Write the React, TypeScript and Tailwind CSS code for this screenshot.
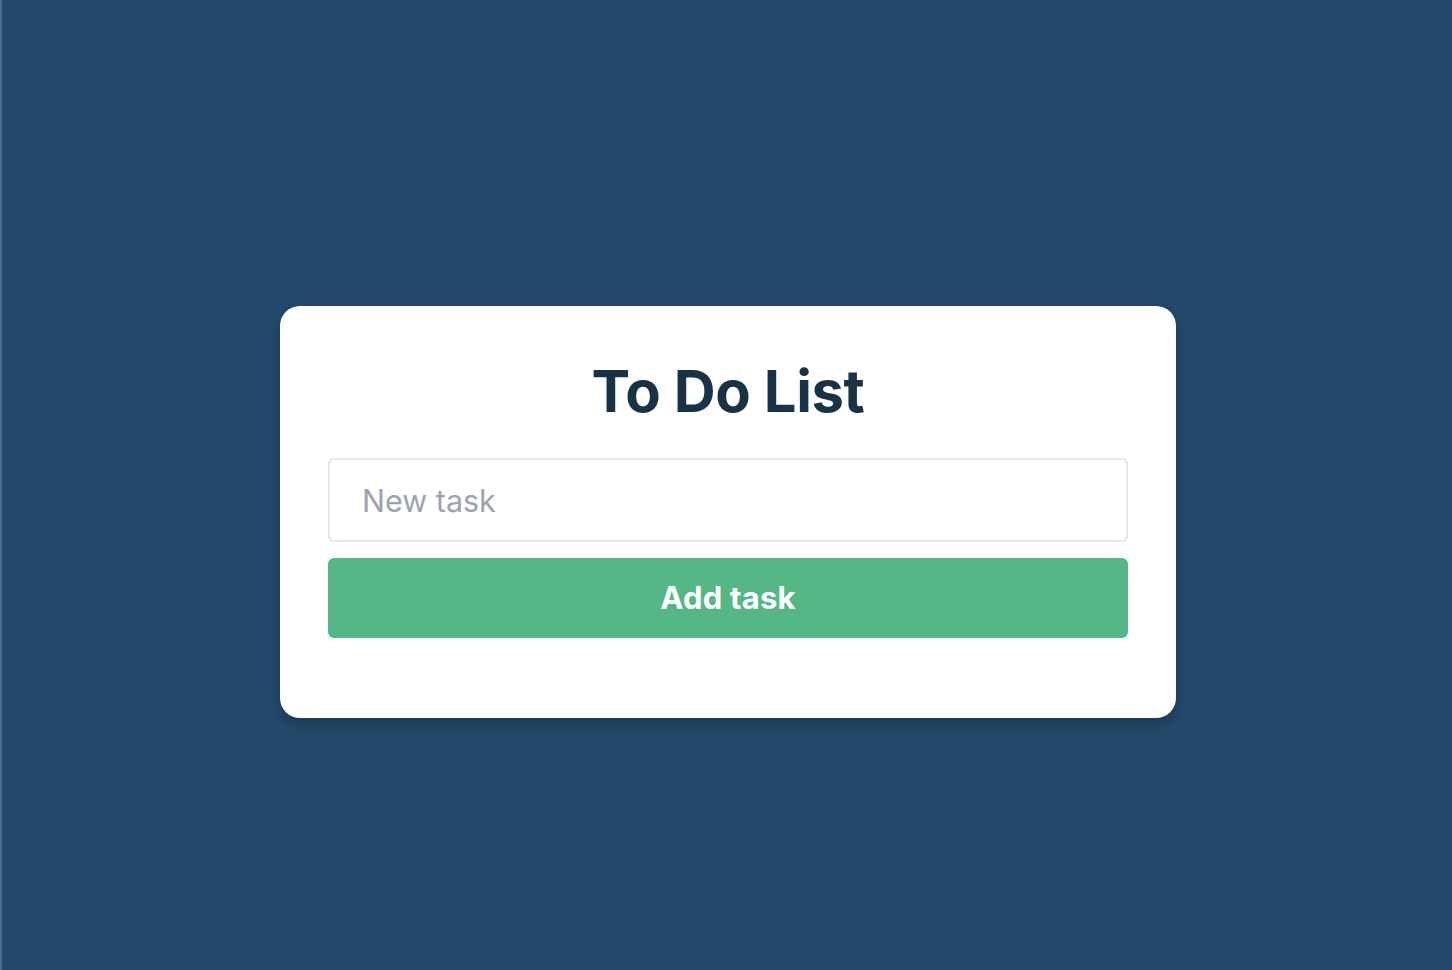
import React, { useState } from "react";

export default function App() {
  const [tasks, setTasks] = useState<string[]>([]);
  const [value, setValue] = useState("");

  const addTask = () => {
    if (!value.trim()) return;
    setTasks((prev) => [...prev, value.trim()]);
    setValue("");
  };

  return (
    <div
      className="min-h-screen w-full bg-[#234a6d] border-l-2 border-[#4f6b86] flex items-center justify-center pt-[54px] pl-[2px]"
      style={{ fontFamily: "Inter, 'Liberation Sans', sans-serif" }}
    >
      {/* Card */}
      <div className="w-[896px] bg-white rounded-[20px] px-12 pt-12 pb-12 shadow-[0_6px_16px_rgba(0,0,0,0.25)]">
        <h1 className="text-[58px] leading-[70px] font-bold text-[#183246] text-center tracking-[-0.4px] mt-[2px]">
          To Do List
        </h1>

        <form
          onSubmit={(e) => {
            e.preventDefault();
            addTask();
          }}
          className="mt-8 flex flex-col gap-4"
        >
          <input
            type="text"
            placeholder="New task"
            value={value}
            onChange={(e) => setValue(e.target.value)}
            className="h-[84px] w-full border-2 border-[#e5e7eb] rounded-md px-8 text-[30.5px] text-[#183246] placeholder-[#9ca3af] outline-none"
          />
          <button
            type="submit"
            className="h-20 w-full bg-[#55b785] rounded-md text-white text-[31px] font-bold tracking-[0.2px]"
          >
            Add task
          </button>
        </form>

        {/* Task list */}
        <ul className="mt-8">
          {tasks.map((t, i) => (
            <li key={i} className="py-3 text-2xl text-[#183246] border-b border-[#e5e7eb]">
              {t}
            </li>
          ))}
        </ul>
      </div>
    </div>
  );
}
